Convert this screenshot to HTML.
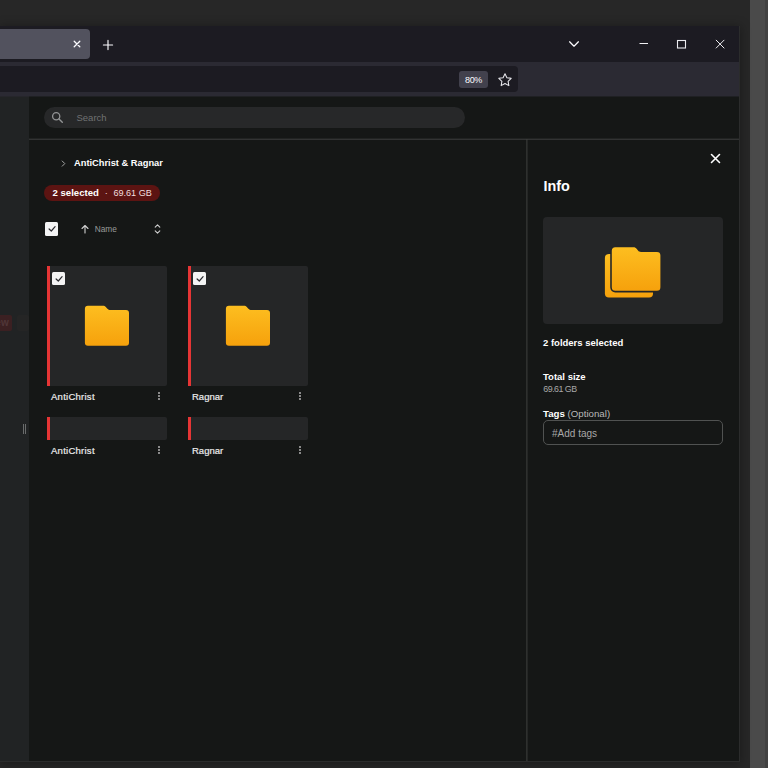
<!DOCTYPE html>
<html lang="en">
<head>
<meta charset="utf-8">
<title>Info</title>
<style>
*{box-sizing:border-box;margin:0;padding:0}
html,body{width:768px;height:768px;overflow:hidden;background:#272727;font-family:"Liberation Sans",sans-serif;color:#fff}
.abs{position:absolute}
#desk{position:absolute;left:0;top:0;width:768px;height:768px;background:#272727}
#rightstrip{left:750px;top:0;width:18px;height:768px;background:#4a4a4a}
#rightstrip2{left:765px;top:0;width:3px;height:768px;background:#414141}
#win{left:0;top:26px;width:740px;height:735.500px;background:#151716;box-shadow:0 1px 10px 1px rgba(0,0,0,.3);overflow:hidden;border-right:1px solid #2b2c2c;border-bottom:1px solid #2b2c2c}
#tabbar{left:0;top:0;width:739px;height:36px;background:#1c1b22}
#tab{left:-10px;top:3px;width:100px;height:30px;background:#52525e;border-radius:4px}
#toolbar{left:0;top:36px;width:739px;height:34px;background:#2b2a33}
#urlbar{left:-10px;top:40px;width:528px;height:26px;background:#1c1b22;border-radius:4px}
#zoom{left:459px;top:44.800px;width:29px;height:17px;background:#42414d;border-radius:3px;font-size:9px;line-height:19px;text-align:center;color:#fbfbfe;letter-spacing:-0.3px}
#content{left:0;top:70px;width:739px;height:665px;background:#151716}
#sidebar{left:0;top:0;width:29px;height:665px;background:#212324}
#search{left:44px;top:11px;width:421px;height:21px;background:#272829;border-radius:11px}
#search span{position:absolute;left:32.500px;top:0;line-height:21.500px;font-size:9.500px;color:#707273}
#hline{left:29px;top:43px;width:710px;height:1px;background:#3f4140;transform:translateY(-0.300px)}
#vline{left:526px;top:43px;width:1px;height:622px;background:#3f4140;transform:translateX(0.400px)}
.t{position:absolute;white-space:nowrap}
#crumb{left:74px;top:61px;font-size:9.3px;font-weight:bold;line-height:12px;color:#fff}
#badge{left:44px;top:89.400px;width:116px;height:15.600px;border-radius:8px;background:#5c1412}
#badge span{position:absolute;left:8.5px;top:0;line-height:16.600px;font-size:9.100px;color:#f1dfdf;white-space:nowrap}
#badge b{color:#fff;font-size:9.6px}#badge i{font-style:normal;display:inline-block;width:14.5px;text-align:center}
.cb{position:absolute;width:13.4px;height:13.4px;background:#f4f4f4;border-radius:1.5px}
.cb svg{position:absolute;left:0;top:0}
#name{left:94.7px;top:127px;font-size:8.3px;line-height:12px;color:#9a9c9b}
.card{position:absolute;width:119.7px;height:119.6px;background:#252627;border-left:3px solid #e63535;border-radius:0 2px 2px 0}
.card2{position:absolute;width:119.7px;height:23.6px;background:#252627;border-left:3px solid #e63535;border-radius:0 2px 2px 0}
.lbl{position:absolute;font-size:9.500px;line-height:12px;color:#ececec;white-space:nowrap;-webkit-text-stroke:0.200px #ececec}
.keb{position:absolute;width:2px;height:8px}
.keb i{position:absolute;left:0.100px;width:1.800px;height:1.800px;border-radius:1px;background:#b0b0b0}
#info{left:543.400px;top:81.900px;font-size:14.400px;font-weight:bold;line-height:16px}
#prev{left:543px;top:121px;width:180px;height:107px;background:#252627;border-radius:4px}
#sel{left:543px;top:240.7px;font-size:9.5px;font-weight:bold;line-height:12px}
#ts{left:543px;top:275.4px;font-size:9.5px;font-weight:bold;line-height:12px}
#tsv{left:543.300px;top:288.400px;font-size:8.900px;line-height:10px;color:#a9a9a9;letter-spacing:-0.520px}
#tags{left:543px;top:311.7px;font-size:9.7px;line-height:12px;color:#b9b9b9}
#tags b{color:#fff}
#tagin{left:543px;top:324px;width:180px;height:24.5px;border:1px solid #505251;border-radius:5px;background:#151716}
#tagin span{position:absolute;left:8px;top:1.500px;line-height:22px;font-size:10px;color:#a8a8a8}
</style>
</head>
<body>
<div id="desk">
  <div id="rightstrip" class="abs"></div>
  <div id="rightstrip2" class="abs"></div>
  <div class="abs" style="left:0;top:25.5px;width:739px;height:3px;background:#1c1b22"></div>
  <div id="win" class="abs">
    <div id="tabbar" class="abs">
      <div id="tab" class="abs"></div>
      <svg class="abs" style="left:70.800px;top:12.100px" width="12" height="12" viewBox="0 0 12 12"><path d="M3.200 3.200l5.600 5.600M8.800 3.200l-5.600 5.600" stroke="#fbfbfe" stroke-width="1.300" stroke-linecap="round"/></svg>
      <svg class="abs" style="left:101.200px;top:11.600px" width="14" height="14" viewBox="0 0 14 14"><path d="M7 2.400v9.200M2.400 7h9.200" stroke="#fbfbfe" stroke-width="1.150" stroke-linecap="round"/></svg>
      <svg class="abs" style="left:567px;top:12px" width="14" height="12" viewBox="0 0 14 12"><path d="M2.600 3.800l4.400 4.400 4.400-4.400" fill="none" stroke="#fbfbfe" stroke-width="1.250" stroke-linecap="round" stroke-linejoin="round"/></svg>
      <svg class="abs" style="left:638px;top:12px" width="12" height="12" viewBox="0 0 12 12"><path d="M1.500 5.500h8.500" stroke="#f0f0f4" stroke-width="1"/></svg>
      <svg class="abs" style="left:676px;top:12px" width="12" height="12" viewBox="0 0 12 12"><rect x="1.500" y="2.500" width="8" height="7.500" fill="none" stroke="#ececf0" stroke-width="1.100"/></svg>
      <svg class="abs" style="left:714px;top:12px" width="12" height="12" viewBox="0 0 12 12"><path d="M1.900 1.900l8.400 8.400M10.300 1.900l-8.400 8.400" stroke="#ececf0" stroke-width="1"/></svg>
    </div>
    <div id="toolbar" class="abs"></div>
    <div id="urlbar" class="abs"></div>
    <div id="zoom" class="abs">80%</div>
    <svg class="abs" style="left:496.800px;top:45.500px" width="16" height="16" viewBox="0 0 16 16"><path d="M8 1.8l1.9 3.9 4.3.6-3.1 3 .75 4.3L8 11.55 4.15 13.6l.75-4.3-3.1-3 4.3-.6z" fill="none" stroke="#e9e9ee" stroke-width="1.050" stroke-linejoin="round"/></svg>
    <div id="content" class="abs">
      <div id="sidebar" class="abs"></div>
      <div class="abs" style="left:0;top:0;width:29px;height:1px;background:#26262b"></div><div class="abs" style="left:29px;top:0;width:710px;height:1px;background:#1f2023"></div>
      <div class="abs" style="left:-14px;top:218.600px;width:25.700px;height:16px;background:#3b2022;border-radius:2px;overflow:hidden;font-size:10px;line-height:15px;color:#503638;text-align:right;padding-right:3px;font-weight:bold">New</div><div class="abs" style="left:17px;top:218.600px;width:11.500px;height:16px;background:#252525;border-radius:2px"></div>
      <div class="abs" style="left:22.500px;top:327.700px;width:1px;height:10px;background:#6a6c6c"></div>
      <div class="abs" style="left:25px;top:327.700px;width:1px;height:10px;background:#6a6c6c"></div>
      <div id="search" class="abs">
        <svg class="abs" style="left:7px;top:4px" width="13" height="13" viewBox="0 0 13 13"><circle cx="5.200" cy="5.200" r="3.600" fill="none" stroke="#929495" stroke-width="1.300"/><path d="M8 8l3.300 3.300" stroke="#929495" stroke-width="1.400" stroke-linecap="round"/></svg>
        <span>Search</span>
      </div>
      <div id="hline" class="abs"></div>
      <div id="vline" class="abs"></div>

      <svg class="abs" style="left:60px;top:63px" width="7" height="9" viewBox="0 0 7 9"><path d="M2.200 2l2.600 2.600-2.600 2.600" fill="none" stroke="#a4a6a5" stroke-width="1" stroke-linecap="round" stroke-linejoin="round"/></svg>
      <div id="crumb" class="t">AntiChrist &amp; Ragnar</div>
      <div id="badge" class="abs"><span><b>2 selected</b><i>·</i>69.61 GB</span></div>

      <div class="cb" style="left:44.5px;top:126.3px"><svg width="13.4" height="13.4" viewBox="0 0 13.4 13.4"><path d="M4.100 7l2.200 2 3.800-4.300" fill="none" stroke="#2b2b30" stroke-width="1.200" stroke-linecap="round" stroke-linejoin="round"/></svg></div>
      <svg class="abs" style="left:79.500px;top:128px" width="10" height="10" viewBox="0 0 10 10"><path d="M5 9V1.5M2 4.5l3-3 3 3" fill="none" stroke="#d0d0d0" stroke-width="1.1" stroke-linecap="round" stroke-linejoin="round"/></svg>
      <div id="name" class="t">Name</div>
      <svg class="abs" style="left:154px;top:127px" width="7" height="12" viewBox="0 0 7 12"><path d="M1.2 4.2l2.3-2.3 2.3 2.3M1.2 7.8l2.3 2.3 2.3-2.3" fill="none" stroke="#d0d0d0" stroke-width="1.1" stroke-linecap="round" stroke-linejoin="round"/></svg>

      <div class="card" style="left:47px;top:170.4px"></div>
      <div class="card" style="left:188px;top:170.4px"></div>
      <div class="cb" style="left:51.9px;top:175.6px"><svg width="13.4" height="13.4" viewBox="0 0 13.4 13.4"><path d="M4.100 7l2.200 2 3.800-4.300" fill="none" stroke="#2b2b30" stroke-width="1.200" stroke-linecap="round" stroke-linejoin="round"/></svg></div>
      <div class="cb" style="left:192.9px;top:175.6px"><svg width="13.4" height="13.4" viewBox="0 0 13.4 13.4"><path d="M4.100 7l2.200 2 3.800-4.300" fill="none" stroke="#2b2b30" stroke-width="1.200" stroke-linecap="round" stroke-linejoin="round"/></svg></div>

      <svg class="abs" style="left:84px;top:208px" width="46" height="44" viewBox="0 0 46 44"><defs><linearGradient id="fg" x1="0" y1="0" x2="0" y2="1"><stop offset="0" stop-color="#fdbe20"/><stop offset="1" stop-color="#f6a10c"/></linearGradient></defs><path d="M3.9 1.8H18.8C20.2 1.8 21 2.2 22 3.2L23.4 4.7C24.3 5.600 25.100 6 26.500 6H42a3 3 0 0 1 3 3V38.700a3 3 0 0 1-3 3H3.900a3 3 0 0 1-3-3V4.800a3 3 0 0 1 3-3z" fill="url(#fg)"/></svg>
      <svg class="abs" style="left:225px;top:208px" width="46" height="44" viewBox="0 0 46 44"><path d="M3.9 1.8H18.8C20.2 1.8 21 2.2 22 3.2L23.4 4.7C24.3 5.600 25.100 6 26.500 6H42a3 3 0 0 1 3 3V38.700a3 3 0 0 1-3 3H3.900a3 3 0 0 1-3-3V4.800a3 3 0 0 1 3-3z" fill="url(#fg)"/></svg>

      <div class="lbl" style="left:51px;top:295px;letter-spacing:0.260px">AntiChrist</div>
      <div class="lbl" style="left:192px;top:295px">Ragnar</div>
      <div class="keb" style="left:158px;top:296.400px"><i style="top:0"></i><i style="top:3px"></i><i style="top:6px"></i></div>
      <div class="keb" style="left:299px;top:296.400px"><i style="top:0"></i><i style="top:3px"></i><i style="top:6px"></i></div>

      <div class="card2" style="left:47px;top:320.5px"></div>
      <div class="card2" style="left:188px;top:320.5px"></div>
      <div class="lbl" style="left:51px;top:349px;letter-spacing:0.260px">AntiChrist</div>
      <div class="lbl" style="left:192px;top:349px">Ragnar</div>
      <div class="keb" style="left:158px;top:350.400px"><i style="top:0"></i><i style="top:3px"></i><i style="top:6px"></i></div>
      <div class="keb" style="left:299px;top:350.400px"><i style="top:0"></i><i style="top:3px"></i><i style="top:6px"></i></div>

      <svg class="abs" style="left:709.500px;top:56.500px" width="11" height="11" viewBox="0 0 11 11"><path d="M1.500 1.500l8 8M9.500 1.500l-8 8" stroke="#fff" stroke-width="1.600" stroke-linecap="round"/></svg>
      <div id="info" class="t">Info</div>
      <div id="prev" class="abs">
        <svg class="abs" style="left:57px;top:23px" width="70" height="64" viewBox="0 -0.400 70 64"><rect x="4.900" y="13.700" width="48.100" height="43.300" rx="4" fill="url(#fg)"/><path d="M15.300 6.900H33.500C35 6.900 35.800 7.400 36.800 8.600L38 10.200C38.800 11.200 39.600 11.600 41 11.600H56.900a3.500 3.500 0 0 1 3.500 3.500V46.900a3.500 3.500 0 0 1-3.500 3.500H15.300a3.500 3.500 0 0 1-3.500-3.500V10.400a3.500 3.500 0 0 1 3.500-3.500z" fill="#252627" stroke="#252627" stroke-width="3.200" stroke-linejoin="round"/><path d="M15.300 6.900H33.500C35 6.900 35.800 7.400 36.800 8.600L38 10.200C38.800 11.200 39.600 11.600 41 11.600H56.900a3.500 3.500 0 0 1 3.500 3.500V46.900a3.500 3.500 0 0 1-3.500 3.500H15.300a3.500 3.500 0 0 1-3.500-3.500V10.400a3.500 3.500 0 0 1 3.500-3.500z" fill="url(#fg)"/></svg>
      </div>
      <div id="sel" class="t">2 folders selected</div>
      <div id="ts" class="t">Total size</div>
      <div id="tsv" class="t">69.61 GB</div>
      <div id="tags" class="t"><b>Tags</b> (Optional)</div>
      <div id="tagin" class="abs"><span>#Add tags</span></div>
    </div>
  </div>
</div>
</body>
</html>
